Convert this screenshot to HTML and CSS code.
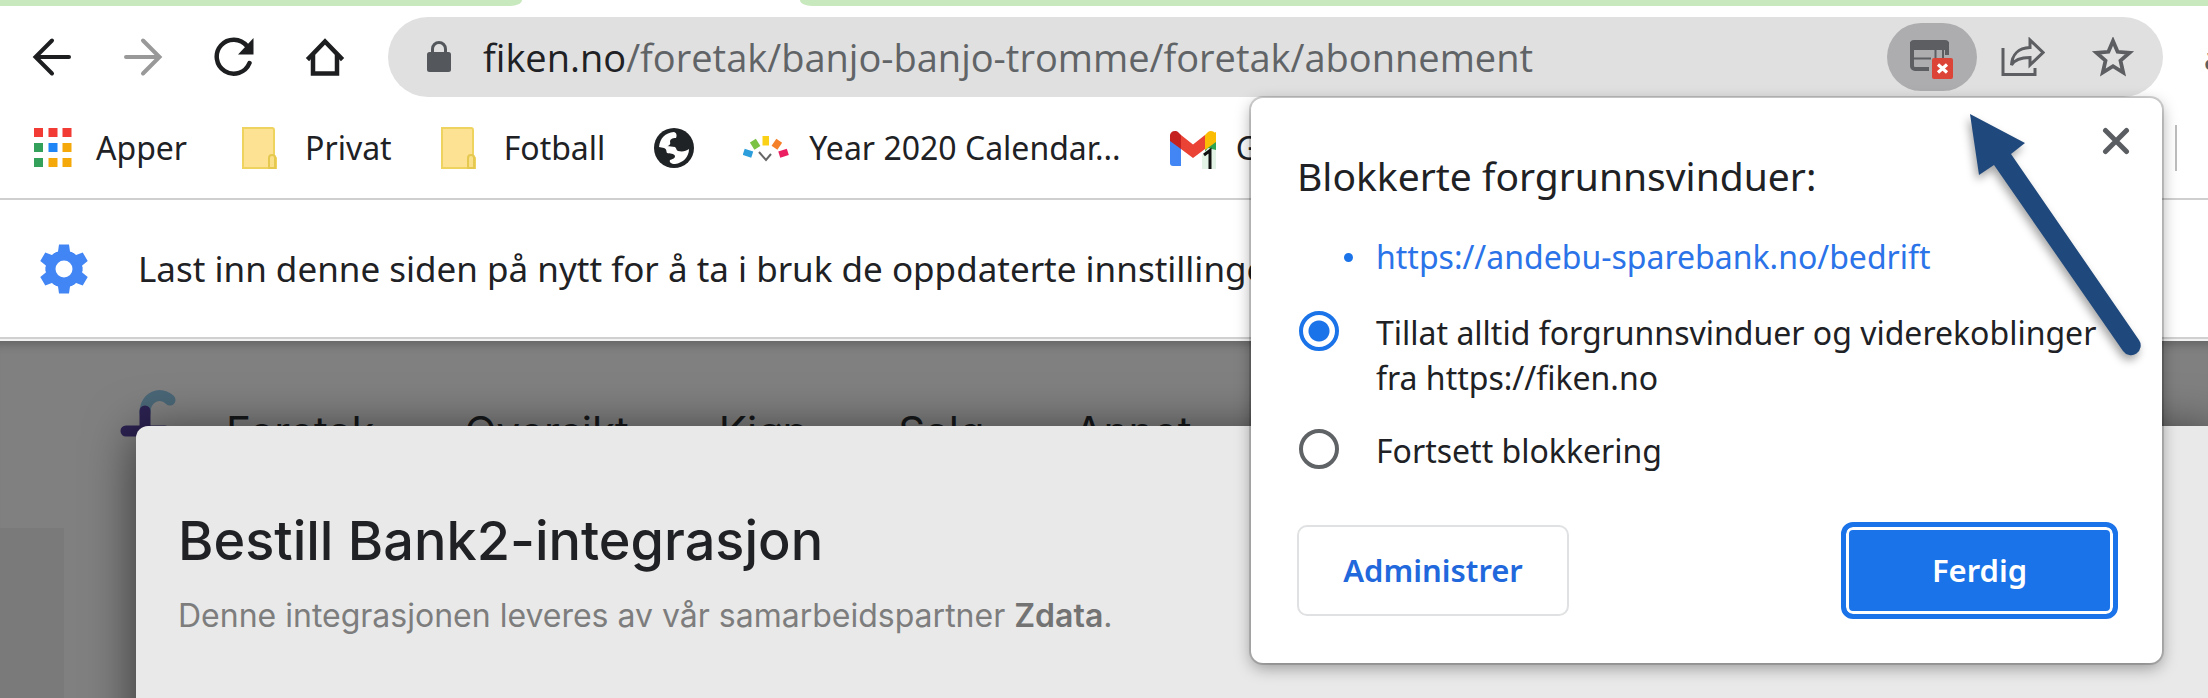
FILE: index.html
```html
<!DOCTYPE html>
<html lang="no">
<head>
<meta charset="utf-8">
<title>Fiken – Abonnement</title>
<link rel="stylesheet" href="styles.css">
</head>
<body>
<div class="window">
  <header class="chrome">
    <div class="tabstrip"><span class="tabs-left"></span><span class="tabs-right"></span></div>

    <div class="toolbar">
      <nav class="nav-buttons" aria-label="Navigasjon">
        <button class="icon-button" aria-label="Tilbake">
          <svg viewBox="0 0 40 40" fill="none" stroke="#1c1e20" stroke-width="4" stroke-linecap="round"><path d="M37 20H4M20 3.500L3.500 20L20 36.500"/></svg>
        </button>
        <button class="icon-button" aria-label="Frem">
          <svg viewBox="0 0 40 40" fill="none" stroke="#999" stroke-width="4" stroke-linecap="round"><path d="M3 20H36M20 3.500L36.500 20L20 36.500"/></svg>
        </button>
        <button class="icon-button" aria-label="Last inn på nytt">
          <svg viewBox="0 0 40 40"><path d="M35.500 26A17 17 0 1 1 33 9" fill="none" stroke="#1c1e20" stroke-width="4.500" stroke-linecap="round"/><path d="M39.500 1V17.500H24Z" fill="#1c1e20"/></svg>
        </button>
        <button class="icon-button" aria-label="Startside">
          <svg viewBox="0 0 40 40" fill="none" stroke="#1c1e20" stroke-width="4.500"><path d="M8 18V36.500H32V18"/><path d="M4 21L20 4.500L36 21" stroke-linecap="square"/></svg>
        </button>
      </nav>

      <div class="omnibox">
        <svg class="lock" viewBox="0 0 24 32"><rect x="0" y="11" width="24" height="20" rx="2.500" fill="#54585c"/><path d="M5.500 12V8A6.500 6.500 0 0 1 18.500 8V12" fill="none" stroke="#54585c" stroke-width="3"/></svg>
        <div class="url"><span class="host">fiken.no</span>/foretak/banjo-banjo-tromme/foretak/abonnement</div>
        <button class="popup-indicator" aria-label="Forgrunnsvinduer er blokkert">
          <svg viewBox="0 0 44 40"><path d="M19 30H5A3 3 0 0 1 2 27V5H37V16" fill="none" stroke="#5c5e62" stroke-width="4"/><rect x="0" y="1" width="39" height="10" rx="4" fill="#5c5e62"/><path d="M4 19.500H21M25.500 10V19M33 10V19" stroke="#5c5e62" stroke-width="2"/><rect x="22" y="19" width="21" height="21" rx="2" fill="#dc4437"/><path d="M28 25.500L37 33.500M37 25.500L28 33.500" stroke="#fff" stroke-width="3.200"/></svg>
        </button>
        <button class="icon-button" aria-label="Del">
          <svg viewBox="0 0 44 40" fill="none" stroke="#5c5e62" stroke-width="3"><path d="M2 11V37.500H34V31"/><path d="M10.500 28C11 18 17 11 29 10.500V3L42 15.500L29 28V20.500C20 20.500 14 22 10.500 28Z"/></svg>
        </button>
        <button class="icon-button" aria-label="Legg til bokmerke">
          <svg viewBox="0 0 44 40" fill="none" stroke="#5c5e62" stroke-width="3.800"><path d="M22 4L26.600 14.800L38.500 15.800L29.500 23.600L32.200 35.500L22 29.200L11.800 35.500L14.500 23.600L5.500 15.800L17.400 14.800Z"/></svg>
        </button>
      </div>
      <span class="extension">a</span>
    </div>

    <nav class="bookmarks" aria-label="Bokmerker">
      <a class="bookmark apps" href="#apper">
        <svg class="bookmark-icon" viewBox="0 0 40 42"><g fill="#f23b35"><rect x="1" y="1" width="9" height="9"/><rect x="15.500" y="1" width="9" height="9"/><rect x="29.500" y="1" width="9" height="9"/></g><g fill="#34a15a"><rect x="1" y="16" width="9" height="9"/><rect x="1" y="31" width="9" height="9"/></g><rect x="15.500" y="16" width="9" height="9" fill="#2186f5"/><g fill="#f5a80a"><rect x="29.500" y="16" width="9" height="9"/><rect x="15.500" y="31" width="9" height="9"/><rect x="29.500" y="31" width="9" height="9"/></g></svg>
        Apper
      </a>
      <a class="bookmark" href="#privat">
        <svg class="bookmark-icon" viewBox="0 0 40 42"><path d="M1 1H30A2 2 0 0 1 32 3V28L34 31V41H1Z" fill="#fde293" stroke="#efd35f" stroke-width="2"/><path d="M27 41V31A3 3 0 0 1 33 31V41Z" fill="#fbe08a" stroke="#e5c84f" stroke-width="2"/></svg>
        Privat
      </a>
      <a class="bookmark" href="#fotball">
        <svg class="bookmark-icon" viewBox="0 0 40 42"><path d="M1 1H30A2 2 0 0 1 32 3V28L34 31V41H1Z" fill="#fde293" stroke="#efd35f" stroke-width="2"/><path d="M27 41V31A3 3 0 0 1 33 31V41Z" fill="#fbe08a" stroke="#e5c84f" stroke-width="2"/></svg>
        Fotball
      </a>
      <a class="bookmark" href="#nettsted" aria-label="Nettsted">
        <svg class="bookmark-icon" viewBox="0 0 40 42"><circle cx="20" cy="21" r="20" fill="#202326"/><path d="M5 20C6 11 11 6 20 5C23 6 23 9 22 11C18 11 16 12 16 15C17 17 15 19 13 19L21 20C23 22 22 23 24 24C29 25 32 24 35 22C35 30 29 36 21 37C17 37 15 35 16 33C18 32 21 32 21 29C20 26 16 27 13 26C12 24 13 22 10 21Z" fill="#fff"/></svg>
      </a>
      <a class="bookmark wide" href="#kalender">
        <svg class="bookmark-icon" viewBox="0 0 46 42"><rect x="19.500" y="9" width="6.500" height="9.500" fill="#fbd117"/><rect x="-3.500" y="-4" width="7" height="8.500" fill="#7bc143" transform="translate(12 17) rotate(-32)"/><rect x="-3.500" y="-4" width="7" height="8.500" fill="#f4812a" transform="translate(34 17) rotate(34)"/><rect x="-4" y="-3.200" width="9" height="6.500" fill="#2b9edb" transform="translate(4.500 26) rotate(18)"/><rect x="-5" y="-3.200" width="9" height="6.500" fill="#ec1e62" transform="translate(41 26) rotate(-18)"/><path d="M16 25L23 33L28 27" fill="none" stroke="#666" stroke-width="2"/></svg>
        Year 2020 Calendar...
      </a>
      <a class="bookmark wide" href="#gmail">
        <svg class="bookmark-icon" viewBox="0 0 46 42"><path d="M0 10H11V39H3A3 3 0 0 1 0 36Z" fill="#4285f4"/><path d="M35 15H46V28H35Z" fill="#2fa350"/><path d="M35 10L46 5V15L35 23Z" fill="#fbbc04"/><path d="M11 8L23 17.500L35 8V22L23 31L11 22Z" fill="#ea4335"/><path d="M0 8A5 5 0 0 1 8 5L11 8V22L0 14Z" fill="#c5221f"/><path d="M35 8L38 5A5 5 0 0 1 46 9V14L35 22Z" fill="#fbbc04"/><path d="M32 28L38 21L46 23V42H32Z" fill="#e3f4e6"/><path d="M34 28L40 23.500V42" fill="none" stroke="#111" stroke-width="3"/></svg>
        Gmail
      </a>
      <span class="bookmark-divider"></span>
    </nav>

    <div class="infobar" role="status">
      <svg class="gear" viewBox="0 0 50 50" fill="#4285f4"><circle cx="25" cy="25" r="18"/><g id="teeth"><path d="M14 10L19 7.500L20 0.500H30L31 7.500L36 10V40L31 42.500L30 49.500H20L19 42.500L14 40Z"/></g><use href="#teeth" transform="rotate(60 25 25)"/><use href="#teeth" transform="rotate(120 25 25)"/><circle cx="25" cy="25" r="8.500" fill="#fff"/></svg>
      <span>Last inn denne siden på nytt for å ta i bruk de oppdaterte innstillingene.</span>
    </div>
  </header>

  <main class="page">
    <nav class="site-nav" aria-label="Hovedmeny">
      <svg class="logo" viewBox="0 0 60 86"><path d="M26 25C26 8 42 3 51 12" fill="none" stroke="#4a6777" stroke-width="11" stroke-linecap="round"/><path d="M26 23V80M7 43H46" fill="none" stroke="#2c2252" stroke-width="11" stroke-linecap="round"/></svg>
      <a href="#foretak">Foretak</a>
      <a href="#oversikt">Oversikt</a>
      <a href="#kjop">Kjøp</a>
      <a href="#salg">Salg</a>
      <a href="#annet">Annet</a>
    </nav>
    <div class="side-panel"></div>
    <section class="modal" aria-labelledby="modal-title">
      <h1 id="modal-title">Bestill Bank2-integrasjon</h1>
      <p>Denne integrasjonen leveres av vår samarbeidspartner <strong>Zdata</strong>.</p>
    </section>
  </main>

  <form class="popup" aria-labelledby="popup-title">
    <h2 id="popup-title">Blokkerte forgrunnsvinduer:</h2>
    <button class="close" type="button" aria-label="Lukk">
      <svg viewBox="0 0 28 28" stroke="#5a5d61" stroke-width="5" stroke-linecap="round"><path d="M3.500 3.500L24.500 24.500M24.500 3.500L3.500 24.500"/></svg>
    </button>
    <ul class="blocked">
      <li><a href="https://andebu-sparebank.no/bedrift">https://andebu-sparebank.no/bedrift</a></li>
    </ul>
    <label class="choice"><input type="radio" name="policy" checked><span>Tillat alltid forgrunnsvinduer og viderekoblinger<br>fra https://fiken.no</span></label>
    <label class="choice"><input type="radio" name="policy"><span>Fortsett blokkering</span></label>
    <div class="actions">
      <button class="manage" type="button">Administrer</button>
      <button class="done" type="button">Ferdig</button>
    </div>
    <svg class="pointer" viewBox="0 0 190 260"><path d="M10 9L65 38L51 49L179 235A9.500 9.500 0 0 1 163 246L34 60L19 70Z" fill="#1f497d"/></svg>
  </form>
</div>
</body>
</html>
```
FILE: styles.css
```css
* { box-sizing: border-box; }

body {
  margin: 0;
  font-family: "Noto Sans", sans-serif;
  color: #202124;
  background: #808080;
}

button { padding: 0; border: 0; background: none; font: inherit; }
a { color: inherit; text-decoration: none; }
svg { display: block; flex: none; }

.window {
  position: relative;
  display: flex;
  flex-direction: column;
  height: 100vh;
  overflow: hidden;
}

.chrome { background: #fff; border-bottom: 2px solid #d0d0d0; }

/* Tab strip */
.tabstrip { display: flex; gap: 278px; height: 6px; }
.tabs-left, .tabs-right { background: #c8e8be; }
.tabs-left { width: 522px; border-bottom-right-radius: 12px 6px; }
.tabs-right { flex: 1; border-bottom-left-radius: 12px 6px; }

/* Toolbar */
.toolbar {
  display: flex;
  align-items: center;
  padding: 11px 0 0 32px;
}
.nav-buttons { display: flex; gap: 51px; margin-right: 43px; }
.icon-button svg { height: 40px; }
.omnibox {
  display: flex;
  flex: 1;
  align-items: center;
  height: 80px;
  padding: 0 28px 0 39px;
  border-radius: 40px;
  background: #e0e0e0;
}
.lock { width: 24px; height: 32px; margin-right: 32px; }
.url {
  flex: 1;
  overflow: hidden;
  font-family: "Open Sans", sans-serif;
  font-size: 38px;
  line-height: 56px;
  white-space: nowrap;
  color: #616467;
}
.host { color: #202124; }
.popup-indicator {
  display: flex;
  align-items: center;
  justify-content: center;
  width: 90px;
  height: 68px;
  border-radius: 34px;
  background: #adadaf;
}
.popup-indicator svg { width: 44px; height: 40px; margin-top: 4px; }
.omnibox .icon-button { margin-left: 24px; }
.omnibox .icon-button + .icon-button { margin-left: 46px; }
.extension {
  width: 4px;
  margin-left: 41px;
  overflow: hidden;
  font-size: 32px;
  font-weight: 600;
  color: #5c5e62;
}

/* Bookmarks bar */
.bookmarks {
  display: flex;
  align-items: center;
  gap: 49px;
  height: 103px;
  padding-left: 33px;
  border-bottom: 2px solid #cfcfcf;
}
.bookmark {
  display: flex;
  flex: none;
  align-items: center;
  gap: 23px;
  font-size: 32px;
  line-height: 44px;
}
.bookmark.apps { margin-right: 6px; }
.bookmark.wide { gap: 20px; }
.bookmark-icon { width: 40px; height: 42px; }
.wide .bookmark-icon { width: 46px; }
.bookmark-divider {
  width: 2px;
  height: 46px;
  margin: 0 31px 0 auto;
  background: #bdbdbd;
}

/* Infobar */
.infobar {
  display: flex;
  align-items: center;
  gap: 49px;
  height: 137px;
  padding-left: 39px;
  font-size: 35px;
  line-height: 48px;
  white-space: nowrap;
}
.gear { width: 50px; height: 50px; }

/* Dimmed site */
.page {
  position: relative;
  flex: 1;
  border-top: 2px solid #f2f2f2;
  background: #808080;
  box-shadow: inset 0 12px 8px -8px #666;
}
.site-nav {
  display: flex;
  align-items: center;
  gap: 90px;
  height: 180px;
  padding-left: 119px;
  font-family: Inter, sans-serif;
  font-size: 42px;
  color: #16181a;
}
.logo { width: 60px; height: 86px; margin-right: -43px; }
.side-panel { width: 64px; height: 300px; margin-top: 7px; background: #7a7a7a; }
.modal {
  position: absolute;
  top: 85px;
  right: -12px;
  bottom: -12px;
  left: 136px;
  padding: 83px 42px;
  border-radius: 12px;
  background: #e9e9e9;
  box-shadow: 0 6px 50px rgba(0, 0, 0, .6);
  font-family: Inter, sans-serif;
}
.modal h1 {
  margin: 0 0 23px;
  font-size: 54px;
  font-weight: 500;
  line-height: 64px;
  color: #202124;
}
.modal p { margin: 0; font-size: 32px; line-height: 40px; color: #7d7d7d; }
.modal strong { font-weight: 600; color: #737373; }

/* Blocked pop-ups bubble */
.popup {
  position: absolute;
  top: 98px;
  right: 46px;
  width: 911px;
  padding: 52px 44px 44px 46px;
  border-radius: 12px;
  background: #fff;
  box-shadow: 0 0 0 2px rgba(0, 0, 0, .16), 0 5px 16px rgba(0, 0, 0, .35);
  font-size: 32px;
  line-height: 45px;
}
.popup h2 { margin: 0 0 32px; font-size: 39px; font-weight: 400; line-height: 52px; }
.close { position: absolute; top: 29px; right: 32px; }
.close svg { width: 28px; height: 28px; }
.blocked { margin: 0 0 31px; padding-left: 79px; list-style: none; color: #2b73e8; }
.blocked li { position: relative; }
.blocked li::before {
  content: "";
  position: absolute;
  top: 19px;
  left: -32px;
  width: 9px;
  height: 9px;
  border-radius: 50%;
  background: #1a73e8;
}
.choice { display: flex; align-items: flex-start; gap: 37px; margin-bottom: 28px; }
.choice input {
  flex: none;
  appearance: none;
  width: 40px;
  height: 40px;
  margin: 1px 0 0 2px;
  border: 4px solid #606366;
  border-radius: 50%;
}
.choice input:checked {
  border-color: #1a73e8;
  background: radial-gradient(circle, #1a73e8 10px, transparent 11px);
}
.actions {
  display: flex;
  align-items: center;
  justify-content: space-between;
  margin-top: 49px;
  font-size: 31px;
  font-weight: 600;
}
.manage {
  width: 272px;
  height: 91px;
  border: 2px solid #e0e1e3;
  border-radius: 10px;
  color: #2168dc;
}
.done {
  width: 277px;
  height: 97px;
  border: 5px solid #1a73e8;
  border-radius: 12px;
  background: #1a73e8;
  box-shadow: inset 0 0 0 3px #fff;
  color: #fff;
}
.pointer {
  position: absolute;
  top: 7px;
  right: 12px;
  width: 190px;
  height: 260px;
  filter: drop-shadow(-2px 5px 4px rgba(0, 0, 0, .35));
}
```
